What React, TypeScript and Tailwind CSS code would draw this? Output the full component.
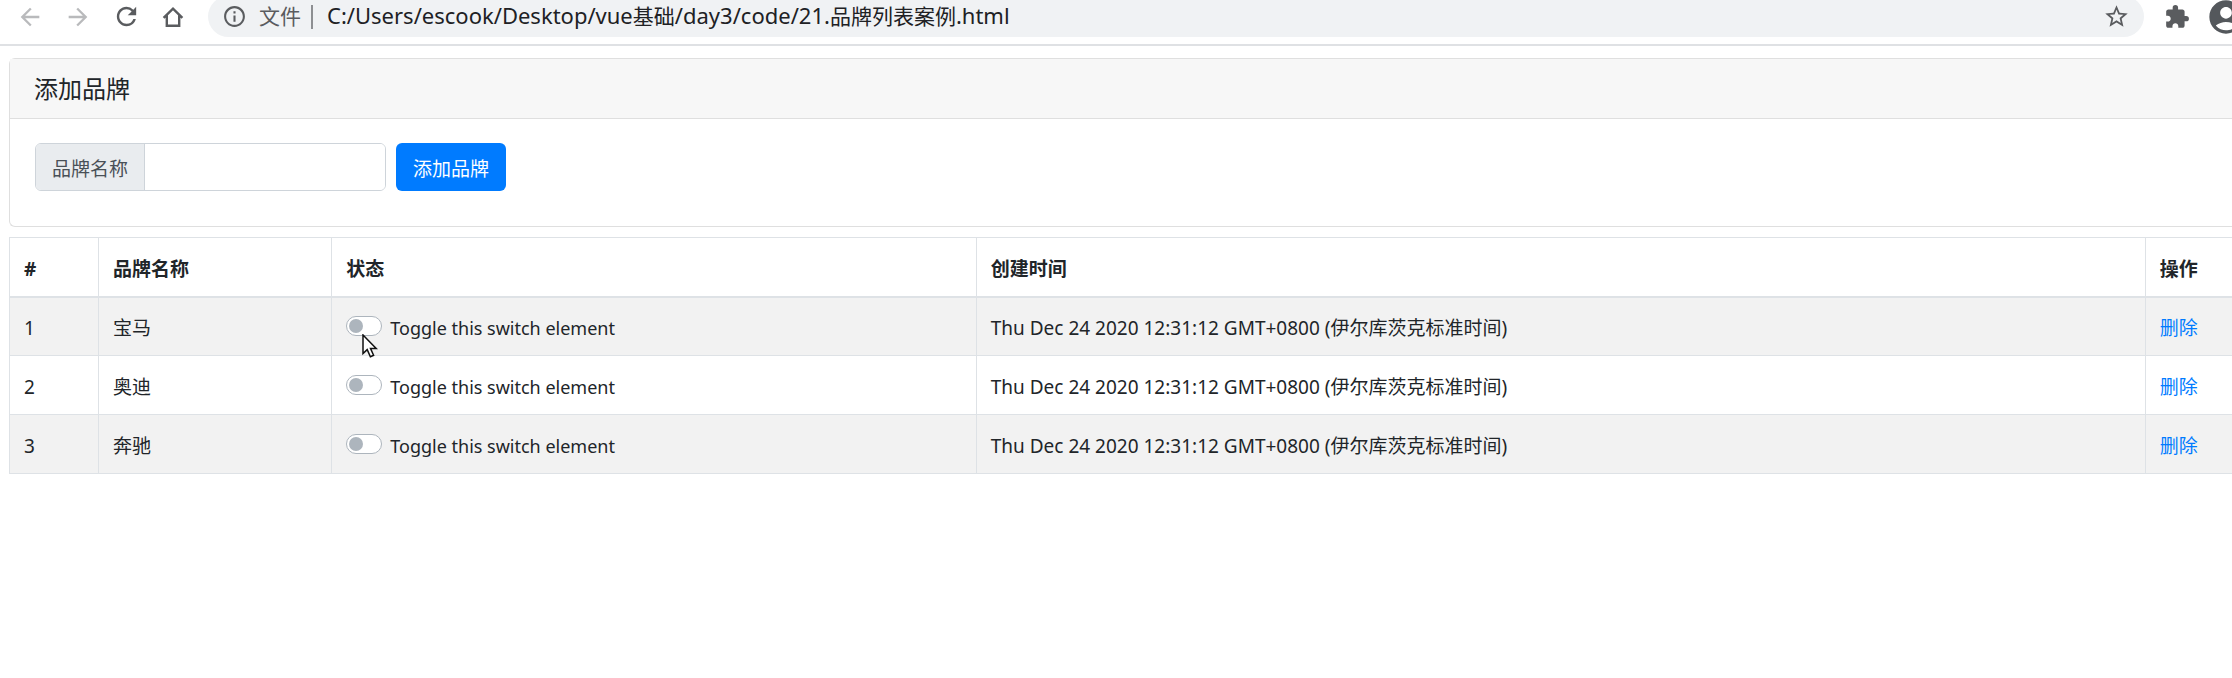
import React, { useState } from 'react';
import {
  MdAccountCircle,
  MdArrowBack,
  MdArrowForward,
  MdExtension,
  MdInfoOutline,
  MdRefresh,
  MdStarBorder,
} from 'react-icons/md';

const brands = [
  { id: 1, name: '宝马' },
  { id: 2, name: '奥迪' },
  { id: 3, name: '奔驰' },
];

const BrowserBar = () => {
  return (
    <header className="h-[46px] overflow-hidden border-b-2 border-[#dfe1e4] bg-white">
      <div className="-mt-1 flex h-[41px] items-center text-[#5a5c5f]">
        <nav className="flex w-[208px] shrink-0 items-center gap-5 pl-4">
          <button aria-label="后退" className="text-[#b9babc]"><MdArrowBack size={28} /></button>
          <button aria-label="前进" className="text-[#b9babc]"><MdArrowForward size={28} /></button>
          <button aria-label="刷新"><MdRefresh size={29} /></button>
          <button aria-label="主页">
            <svg width="24" height="24" viewBox="0 0 24 24" fill="none" stroke="currentColor" strokeWidth="2.4">
              <path d="M2.6 12.8 L12 3.6 L21.4 12.8 M5.8 10.5 V20.8 H18.2 V10.5" />
            </svg>
          </button>
        </nav>
        <div className="flex h-full flex-1 items-center rounded-full bg-[#f0f2f4] pr-3.5 pl-3.5">
          <MdInfoOutline size={25} />
          <span className="ml-3 pb-0.5 text-[21px] leading-6">文件</span>
          <span className="ml-2.5 h-6 w-0.5 bg-[#8d8f92]"></span>
          <span className="ml-3.5 flex-1 pb-0.5 text-[22px] leading-6 whitespace-nowrap text-[#202124]">
            C:/Users/escook/Desktop/vue<span className="text-[21px]">基础</span>/day3/code/21.
            <span className="text-[21px]">品牌列表案例</span>.html
          </span>
          <button aria-label="收藏"><MdStarBorder size={27} /></button>
        </div>
        <button aria-label="扩展程序" className="ml-5 shrink-0"><MdExtension size={26} /></button>
        <button aria-label="账户" className="-mr-3.5 ml-4 shrink-0 text-[#54585c]"><MdAccountCircle size={40} /></button>
      </div>
    </header>
  );
};

const AddBrand = () => {
  const [name, setName] = useState('');

  return (
    <section className="rounded-l-md border border-r-0 border-[#dfdfdf] bg-white">
      <h1 className="border-b border-[#dfdfdf] bg-[#f7f7f7] px-6 py-[15px] text-2xl leading-[29px]">添加品牌</h1>
      <form className="flex gap-2.5 px-[25px] pt-6 pb-[35px]" onSubmit={(e) => e.preventDefault()}>
        <div className="flex h-12 w-[351px] overflow-hidden rounded-md border border-[#ced4da]">
          <label htmlFor="brand" className="flex items-center border-r border-[#ced4da] bg-[#e9ecef] px-4 pt-1 whitespace-nowrap text-[#495057]">
            品牌名称
          </label>
          <input
            id="brand"
            type="text"
            value={name}
            onChange={(e) => setName(e.target.value)}
            className="min-w-0 flex-1 bg-white px-4 outline-none"
          />
        </div>
        <button type="submit" className="h-12 rounded-md bg-[#007bff] px-[17px] pt-1 text-white">添加品牌</button>
      </form>
    </section>
  );
};

const MousePointer = () => {
  return (
    <svg className="pointer-events-none absolute top-6 left-4" width="16" height="24" viewBox="0 0 16 24">
      <path
        d="M1 1 V19.5 L5.2 15.6 L8.4 22.8 L11.6 21.3 L8.5 14.4 H14.2 Z"
        fill="#fff"
        stroke="#111"
        strokeWidth="1.5"
      />
    </svg>
  );
};

const BrandTable = () => {
  return (
    <table className="mt-2.5 w-full table-fixed border-collapse border border-r-0 border-[#dee2e6]">
      <thead>
        <tr className="h-[59px] border-b-2 border-[#dee2e6] text-left">
          <th className="w-[4%] border-r border-[#dee2e6] px-3.5 pt-1 font-bold">#</th>
          <th className="w-[10.5%] border-r border-[#dee2e6] px-3.5 pt-1 font-bold">品牌名称</th>
          <th className="w-[29%] border-r border-[#dee2e6] px-3.5 pt-1 font-bold">状态</th>
          <th className="w-[52.6%] border-r border-[#dee2e6] px-3.5 pt-1 font-bold">创建时间</th>
          <th className="px-3.5 pt-1 font-bold">操作</th>
        </tr>
      </thead>
      <tbody>
        {brands.map((brand) => (
          <tr key={brand.id} className="h-[59px] border-b border-[#dee2e6] odd:bg-[#f2f2f2]">
            <td className="border-r border-[#dee2e6] px-3.5 pt-1">{brand.id}</td>
            <td className="border-r border-[#dee2e6] px-3.5 pt-1">{brand.name}</td>
            <td className="border-r border-[#dee2e6] px-3.5">
              <div className="relative flex items-center gap-2">
                <input
                  id={`switch${brand.id}`}
                  type="checkbox"
                  className="flex h-5 w-9 appearance-none items-center rounded-full border border-[#adb5bd] bg-white px-0.5 before:size-3.5 before:rounded-full before:bg-[#adb5bd] checked:justify-end checked:bg-[#007bff] checked:before:bg-white"
                />
                <label htmlFor={`switch${brand.id}`} className="pt-1 text-lg">Toggle this switch element</label>
                {brand.id === 1 && <MousePointer />}
              </div>
            </td>
            <td className="border-r border-[#dee2e6] px-3.5 pt-1">
              Thu Dec 24 2020 12:31:12 GMT+0800 (伊尔库茨克标准时间)
            </td>
            <td className="px-3.5 pt-1">
              <a href="#" className="text-[#007bff]">删除</a>
            </td>
          </tr>
        ))}
      </tbody>
    </table>
  );
};

const App = () => {
  return (
    <div className="min-h-screen bg-white font-['Noto_Sans','Noto_Sans_CJK_SC',sans-serif] text-[19px] text-[#212529]">
      <BrowserBar />
      <main className="pt-3 pl-[9px]">
        <AddBrand />
        <BrandTable />
      </main>
    </div>
  );
};

export default App;
